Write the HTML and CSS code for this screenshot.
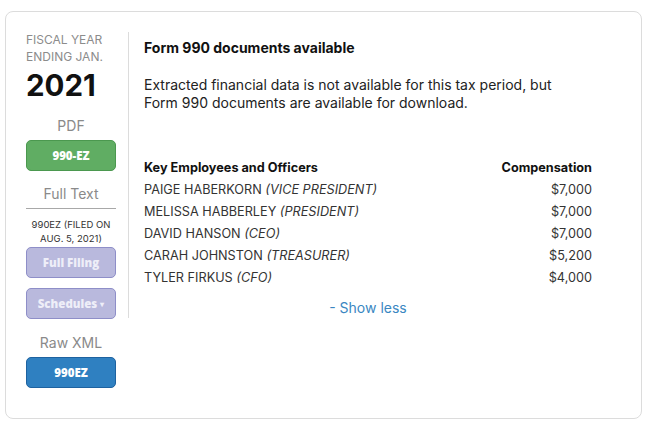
FILE: index.html
```html
<!DOCTYPE html>
<html>
<head>
<meta charset="utf-8">
<link rel="stylesheet" href="styles.css">
</head>
<body>
<div class="card">
  <div class="side">
    <div class="fy">FISCAL YEAR<br>ENDING JAN.</div>
    <div class="year">2021</div>
    <div class="label">PDF</div>
    <div class="btn green">990-EZ</div>
    <div class="label ruled">Full Text</div>
    <div class="filed">990EZ (FILED ON<br>AUG. 5, 2021)</div>
    <div class="btn lav">Full Filing</div>
    <div class="btn lav sched">Schedules <span class="caret">&#9662;</span></div>
    <div class="label raw">Raw XML</div>
    <div class="btn blue">990EZ</div>
  </div>
  <div class="main">
    <div class="title">Form 990 documents available</div>
    <p class="desc">Extracted financial data is not available for this tax period, but<br>Form 990 documents are available for download.</p>
    <table class="officers">
      <tr><th class="name">Key Employees and Officers</th><th class="comp">Compensation</th></tr>
      <tr><td>PAIGE HABERKORN <i>(VICE PRESIDENT)</i></td><td class="comp">$7,000</td></tr>
      <tr><td>MELISSA HABBERLEY <i>(PRESIDENT)</i></td><td class="comp">$7,000</td></tr>
      <tr><td>DAVID HANSON <i>(CEO)</i></td><td class="comp">$7,000</td></tr>
      <tr><td>CARAH JOHNSTON <i>(TREASURER)</i></td><td class="comp">$5,200</td></tr>
      <tr><td>TYLER FIRKUS <i>(CFO)</i></td><td class="comp">$4,000</td></tr>
    </table>
    <div class="less"><a>- Show less</a></div>
  </div>
</div>
</body>
</html>
```
FILE: styles.css
```css
* { box-sizing: border-box; }
body {
  margin: 0;
  background: #fff;
  font-family: Inter, "Open Sans", sans-serif;
  color: #222;
}
.card {
  margin: 11px 6px 0 5px;
  border: 1px solid #dcdcdc;
  border-radius: 8px;
  padding: 20px 20px 30px 20px;
  display: flex;
  align-items: flex-start;
}
.side {
  width: 90px;
  margin-right: 12px;
  flex: none;
}
.fy {
  font-size: 12px;
  line-height: 16.5px;
  color: #8c8c8c;
}
.year {
  font-size: 29.5px;
  font-weight: 700;
  line-height: 34px;
  color: #111;
  margin-top: 3px;
}
.label {
  text-align: center;
  font-size: 14px;
  line-height: 20px;
  color: #8a8a8a;
  margin-top: 14px;
  margin-bottom: 4px;
}
.ruled {
  margin-top: 13px;
  padding-bottom: 4px;
  border-bottom: 1px solid #a8a8a8;
  margin-bottom: 0;
}
.filed {
  text-align: center;
  font-size: 9.5px;
  line-height: 14px;
  color: #333;
  margin-top: 9px;
}
.btn {
  height: 31px;
  border-radius: 5px;
  border: 1px solid;
  display: flex;
  align-items: center;
  justify-content: center;
  font-family: "Open Sans", sans-serif;
  font-weight: 800;
  font-size: 11.5px;
  color: #fff;
}
.green { background: #60ad63; border-color: #4b984f; }
.lav { background: #b9b9dd; border-color: #8e8ec8; color: #eeeef8; margin-top: 1px; }
.sched { margin-top: 10px; }
.caret { font-size: 8px; margin-left: 3px; }
.blue { background: #2f80c1; border-color: #1e62a0; }
.raw { margin-top: 14px; }
.main {
  flex: 1;
  border-left: 1px solid #dcdcdc;
  padding: 6px 29px 0 15px;
}
.title {
  font-size: 14px;
  font-weight: 700;
  line-height: 20px;
  color: #111;
}
.desc {
  margin: 18px 0 0 0;
  font-size: 14px;
  line-height: 18px;
  color: #222;
}
.officers {
  margin-top: 45px;
  width: 100%;
  border-collapse: collapse;
  font-size: 12.7px;
}
.officers th, .officers td {
  padding: 0;
  height: 22px;
  line-height: 22px;
  text-align: left;
}
.officers th { font-weight: 700; color: #111; }
.officers td { color: #333; }
.officers .comp { text-align: right; }
.less {
  margin-top: 9px;
  text-align: center;
  font-size: 14px;
  line-height: 20px;
}
.less a { color: #3a87c2; }
```
